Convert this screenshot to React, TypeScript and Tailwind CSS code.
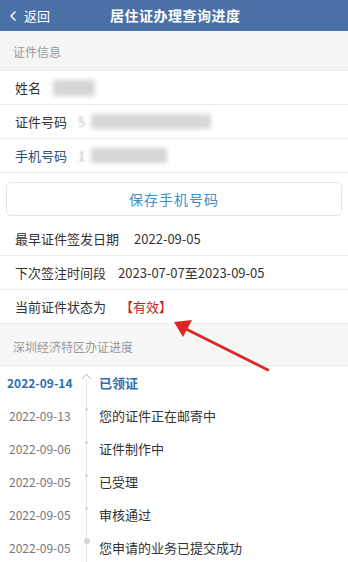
import { ChevronLeft } from "lucide-react";

const font = { fontFamily: '"Noto Sans CJK SC", "Noto Sans", sans-serif' };

type Step = { date: string; text: string; current?: boolean };

const steps: Step[] = [
  { date: "2022-09-14", text: "已领证", current: true },
  { date: "2022-09-13", text: "您的证件正在邮寄中" },
  { date: "2022-09-06", text: "证件制作中" },
  { date: "2022-09-05", text: "已受理" },
  { date: "2022-09-05", text: "审核通过" },
  { date: "2022-09-05", text: "您申请的业务已提交成功" },
];

function Row({ label, children, labelClass = "text-[#333]" }: { label: string; children?: React.ReactNode; labelClass?: string }) {
  return (
    <div className="h-[34px] flex items-center px-[15px] border-b border-[#ececec] text-[13px]">
      <span className={labelClass}>{label}</span>
      {children}
    </div>
  );
}

export default function App() {
  return (
    <div className="relative w-[348px] h-[562px] overflow-hidden bg-white" style={font}>
      {/* Header */}
      <div className="h-[31px] bg-[#4b70a6] flex items-center text-white">
        <div className="flex items-center pl-[5px] w-[110px]">
          <ChevronLeft size={16} strokeWidth={2.2} />
          <span className="text-[13px] ml-[3px]">返回</span>
        </div>
        <span className="text-[14px] font-bold tracking-[0.5px]">居住证办理查询进度</span>
      </div>

      {/* 证件信息 */}
      <div className="h-[40px] bg-[#f5f5f5] flex items-center px-[13px] pt-[2px] text-[12px] text-[#999] border-b border-[#ececec]">
        证件信息
      </div>

      <Row label="姓名">
        <div className="ml-[12px] w-[42px] h-[16px] bg-[#d6d6d6] blur-[2px]" />
      </Row>
      <Row label="证件号码">
        <span className="ml-[11px] text-[#bbb] blur-[1px]">5</span>
        <div className="ml-[6px] w-[120px] h-[15px] bg-[#d8d8d8] blur-[2px]" />
      </Row>
      <Row label="手机号码" labelClass="text-[#2c4d80]">
        <span className="ml-[11px] text-[#bbb] blur-[1px]">1</span>
        <div className="ml-[6px] w-[76px] h-[15px] bg-[#d6d6d6] blur-[2px]" />
      </Row>

      {/* Save button */}
      <div className="px-[6px] pt-[9px] pb-[6px]">
        <div className="h-[34px] rounded-[5px] border border-[#e6e6e6] flex items-center justify-center text-[14px] text-[#3b8fc8] tracking-[1px] shadow-[0_0_2px_rgba(0,0,0,0.04)]">
          保存手机号码
        </div>
      </div>

      <div className="h-[34px] flex items-center px-[15px] border-b border-[#ececec] text-[13px] text-[#333]">
        <span>最早证件签发日期</span>
        <span className="ml-[15px]">2022-09-05</span>
      </div>
      <div className="h-[34px] flex items-center px-[15px] border-b border-[#ececec] text-[13px] text-[#333]">
        <span>下次签注时间段</span>
        <span className="ml-[12px]">2023-07-07至2023-09-05</span>
      </div>
      <div className="h-[34px] flex items-center px-[15px] border-b border-[#ececec] text-[13px] text-[#333]">
        <span>当前证件状态为</span>
        <span className="ml-[14px] text-[#c81e1e]">【有效】</span>
      </div>

      {/* 办证进度 */}
      <div className="h-[42px] bg-[#f7f7f7] flex items-center px-[13px] pt-[4px] text-[12px] text-[#999] border-b border-[#ececec]">
        深圳经济特区办证进度
      </div>

      <div className="relative">
        <div className="absolute left-[86px] top-[12px] bottom-0 w-px bg-[#e8e8e8]" />
        {steps.map((s, i) => (
          <div key={i} className="relative h-[33px] flex items-center">
            <span
              className={
                s.current
                  ? "w-[86px] pl-[7px] text-[12px] font-bold text-[#2f6fae]"
                  : "w-[86px] pl-[9px] text-[12px] text-[#777]"
              }
            >
              {s.date}
            </span>
            {s.current ? (
              <svg className="absolute left-[81px] top-[7px]" width="11" height="7" viewBox="0 0 11 7">
                <path d="M1 6 L5.5 1.5 L10 6" fill="none" stroke="#d4d4d4" strokeWidth="1.3" />
              </svg>
            ) : (
              <span
                className={
                  i === steps.length - 1
                    ? "absolute left-[83.5px] top-[7px] w-[6px] h-[6px] rounded-full bg-[#d6d6d6]"
                    : "absolute left-[85px] top-[9px] w-[3px] h-[3px] rounded-full bg-[#d6d6d6]"
                }
              />
            )}
            <span
              className={
                s.current
                  ? "ml-[13px] text-[13px] font-bold text-[#2f6fae]"
                  : "ml-[13px] text-[13px] text-[#333]"
              }
            >
              {s.text}
            </span>
          </div>
        ))}
      </div>

      {/* red annotation arrow */}
      <svg className="absolute left-0 top-0 pointer-events-none" width="348" height="562" viewBox="0 0 348 562">
        <line x1="268" y1="370" x2="186" y2="329" stroke="#e02424" strokeWidth="2.6" strokeLinecap="round" />
        <path d="M174 322 L192 320 L183 337 Z" fill="#e02424" />
      </svg>
    </div>
  );
}
